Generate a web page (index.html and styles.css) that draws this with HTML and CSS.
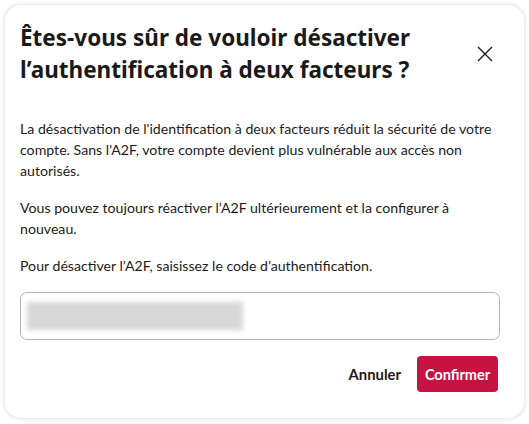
FILE: index.html
```html
<!DOCTYPE html>
<html lang="fr">
<head>
<meta charset="utf-8">
<link rel="stylesheet" href="styles.css">
</head>
<body>
<div class="dialog">
  <div class="header">
    <h1 class="title">Êtes-vous sûr de vouloir désactiver l’authentification à deux facteurs ?</h1>
    <button class="close" aria-label="Fermer">
      <svg width="16" height="16" viewBox="0 0 16 16"><path d="M1 1L15 15M15 1L1 15" stroke="#1a1a1a" stroke-width="1.4" fill="none"/></svg>
    </button>
  </div>
  <div class="content">
    <p>La désactivation de l'identification à deux facteurs réduit la sécurité de votre compte. Sans l'A2F, votre compte devient plus vulnérable aux accès non autorisés.</p>
    <p>Vous pouvez toujours réactiver l’A2F ultérieurement et la configurer à nouveau.</p>
    <p>Pour désactiver l’A2F, saisissez le code d’authentification.</p>
    <div class="input"><div class="blurred"></div></div>
  </div>
  <div class="actions">
    <button class="btn-text">Annuler</button>
    <button class="btn-primary">Confirmer</button>
  </div>
</div>
</body>
</html>
```

FILE: styles.css
```css
* { box-sizing: border-box; }
html, body { margin: 0; padding: 0; background: #ffffff; }
body {
  font-family: "Lato", "Noto Sans", sans-serif;
  color: #1a1a1a;
  padding: 5px;
}
.dialog {
  width: 519px;
  height: 413px;
  background: #fff;
  border-radius: 16px;
  box-shadow: 0 0 5px rgba(0,0,0,0.18);
  padding: 17px 24px 0 15px;
  display: flex;
  flex-direction: column;
}
.header {
  display: flex;
  align-items: center;
  justify-content: space-between;
}
.title {
  margin: 0;
  font-family: "Noto Sans", "Lato", sans-serif;
  font-size: 22.5px;
  line-height: 32px;
  font-weight: 700;
  color: #1a1a1a;
  width: 420px;
}
.close {
  border: 0;
  background: none;
  padding: 0;
  width: 16px;
  height: 16px;
  margin-right: 7px;
  display: flex;
}
.content {
  margin-top: 32px;
}
.content p {
  margin: 0 0 16px 0;
  font-size: 14.15px;
  line-height: 21px;
  color: #1c1c1c;
}
.input {
  margin-top: 1px;
  height: 48px;
  width: 480px;
  border: 1px solid #b5b5b5;
  border-radius: 7px;
  padding: 9px 6px;
}
.blurred {
  width: 216px;
  height: 28px;
  background: #d7d7d7;
  filter: blur(2.5px);
}
.actions {
  display: flex;
  justify-content: flex-end;
  align-items: center;
  gap: 16px;
  margin-top: 16px;
  padding-right: 2px;
}
.btn-text {
  border: 0;
  background: none;
  font-family: inherit;
  font-size: 14.8px;
  font-weight: 700;
  color: #1a1a1a;
  padding: 0;
}
.btn-primary {
  border: 0;
  background: #c51342;
  color: #fff;
  font-family: inherit;
  font-size: 14.5px;
  font-weight: 700;
  height: 36px;
  width: 81px;
  padding: 0;
  border-radius: 4px;
}
```
